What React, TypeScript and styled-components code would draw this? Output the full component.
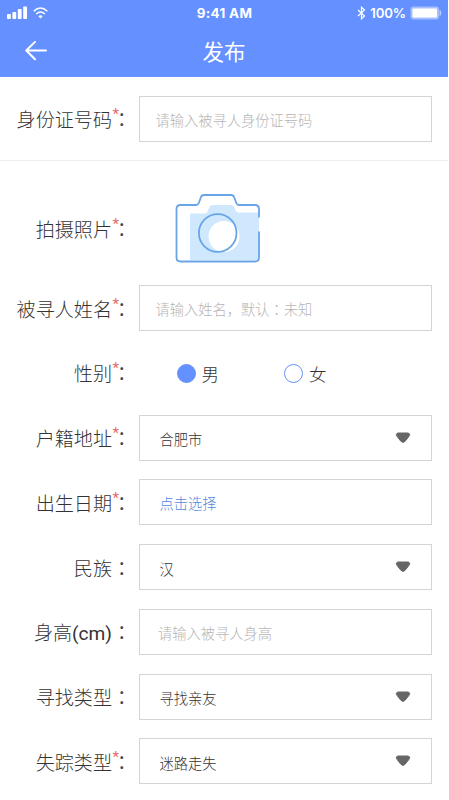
import React, { useState } from "react";
import styled, { createGlobalStyle } from "styled-components";

const GlobalStyle = createGlobalStyle`
  * { box-sizing: border-box; }
  body {
    margin: 0;
    background: #fff;
    overflow: hidden;
    font-family: Roboto, "Noto Sans CJK SC", sans-serif;
    font-weight: 300;
    color: #333;
  }
`;

const Screen = styled.main`
  width: 448px;
  height: 800px;
  overflow: hidden;
  background: #fff;
`;

const Header = styled.header`
  height: 76.5px;
  background: #6491ff;
  color: #fff;
`;

const StatusBar = styled.div`
  display: grid;
  grid-template-columns: 1fr auto 1fr;
  align-items: center;
  height: 25px;
  padding: 0 6px 0 7px;
  font: 700 13.4px Inter, sans-serif;
  letter-spacing: 0.35px;
`;

const StatusGroup = styled.div<{ $end?: boolean }>`
  display: flex;
  align-items: center;
  gap: ${(p) => (p.$end ? "4px" : "6px")};
  justify-content: ${(p) => (p.$end ? "flex-end" : "flex-start")};
  font-weight: 600;
  font-size: 13.2px;
  letter-spacing: -0.1px;
`;

const NavBar = styled.div`
  display: grid;
  grid-template-columns: 1fr auto 1fr;
  align-items: center;
  height: 51px;
  padding: 0 25px;
`;

const BackButton = styled.button`
  display: flex;
  padding: 0;
  border: 0;
  background: none;
`;

const Title = styled.h1`
  margin: 0;
  padding-top: 4px;
  font-size: 21.5px;
  line-height: 32px;
  font-weight: 400;
`;

const IdSection = styled.section`
  height: 84px;
  padding-top: 10px;
  border-bottom: 1px solid #eee;
`;

const Row = styled.div`
  display: grid;
  grid-template-columns: 112px 27px 293px;
  align-items: center;
  height: 64.75px;
`;

const CameraRow = styled.div`
  height: 115.25px;
  padding-top: 33px;
`;

const Label = styled.label`
  padding-top: 5px;
  text-align: right;
  white-space: nowrap;
  font-size: 19.1px;
  line-height: 28px;
`;

const Unit = styled.span`
  font-weight: 400;
`;

const Colon = styled.span`
  position: relative;
  padding: 1px 0 0 5px;
  color: #444;
  font: 350 19px/28px "Noto Sans CJK TC", sans-serif;
  font-feature-settings: "halt";
`;

const Star = styled.sup`
  position: absolute;
  left: 0.5px;
  top: 0;
  color: #e86868;
  font: 400 15px/20px Roboto, sans-serif;
`;

const Box = styled.div<{ $tone?: "hint" | "link"; $inset?: number }>`
  display: flex;
  align-items: center;
  justify-content: space-between;
  height: 46px;
  padding: ${(p) => (p.$tone ? 1 : 2)}px 20px 0 ${(p) => p.$inset ?? 19.5}px;
  border: 1.5px solid #d5d5d5;
  font-size: 14.25px;
  color: ${(p) => (p.$tone === "hint" ? "#b5b5b5" : p.$tone === "link" ? "#5288dc" : "#333")};
`;

const CenteredMark = styled.span`
  font-family: "Noto Sans CJK TC", sans-serif;
`;

const CameraSlot = styled.div`
  padding-left: 36px;
  display: flex;
`;

const Radios = styled.div`
  display: flex;
  padding: 2px 0 0 37.5px;
  gap: 65px;
`;

const Radio = styled.button`
  display: flex;
  align-items: center;
  gap: 6px;
  padding: 0;
  border: 0;
  background: none;
  color: #333;
  font: 300 17.5px/26px "Noto Sans CJK SC", sans-serif;
`;

const Dot = styled.span<{ $on: boolean }>`
  width: 19px;
  height: 19px;
  border-radius: 50%;
  border: 1.5px solid #6491f4;
  background: ${(p) => (p.$on ? "#6491ff" : "#fff")};
`;

const Signal = () => (
  <svg width="20" height="13" viewBox="0 0 20 13" fill="#fff">
    <rect x="0" y="8" width="3.8" height="5" rx="0.8" />
    <rect x="5.4" y="6" width="3.8" height="7" rx="0.8" />
    <rect x="10.8" y="3" width="3.8" height="10" rx="0.8" />
    <rect x="16.2" y="0.5" width="3.8" height="12.5" rx="0.8" />
  </svg>
);

const Wifi = () => (
  <svg width="15" height="12" viewBox="0 0 15 12" fill="none" stroke="#fff" strokeWidth="1.5">
    <path d="M0.7 4.2 Q7.5 -2.2 14.3 4.2M3.2 7 Q7.5 2.9 11.8 7" />
    <path d="M5.4 9.2 Q7.5 7.4 9.6 9.2 L7.5 11.4Z" fill="#fff" stroke="none" />
  </svg>
);

const Bluetooth = () => (
  <svg width="9" height="14" viewBox="0 0 9 14" fill="none" stroke="#fff" strokeWidth="1.2">
    <path d="M1 4 L7.5 10 L4.5 12.8 V1.2 L7.5 4 L1 10" />
  </svg>
);

const Battery = () => (
  <svg width="32" height="14" viewBox="0 0 32 14">
    <rect x="0.5" y="0.5" width="28.5" height="13" rx="3" fill="#a6c0ff" />
    <rect x="2.5" y="2.5" width="24.5" height="9" rx="1" fill="#fff" />
    <path d="M30 4.5 Q32 7 30 9.5Z" fill="#b6caff" stroke="#b6caff" />
  </svg>
);

const BackArrow = () => (
  <svg width="22" height="20" viewBox="0 0 22 20" fill="none" stroke="#fff" strokeWidth="2" strokeLinecap="round" strokeLinejoin="round">
    <path d="M21 9.5 H1.2 M10 0.9 L1.2 9.5 L10 18.3" />
  </svg>
);

const Camera = () => (
  <svg width="86" height="70" viewBox="0 0 86 70" fill="none">
    <path d="M15 19.5 H29 Q32 19.5 33 16.5 L34.5 13 Q35.3 11 37.5 11 H56 Q58.5 11 59.2 13 L60.5 16.5 Q61.3 18.5 63.5 18.5 H84 V66 H15Z" fill="#d0e8fd" />
    <circle cx="49" cy="42.5" r="15.5" fill="#fff" />
    <path
      d="M84 23.5 V15 Q84 11 80 11 H64 Q62 11 61.3 9 L59.3 3.5 Q58.5 1 56 1 H29 Q26.5 1 25.8 3.5 L23.8 9 Q23 11 21 11 H5.5 Q1.5 11 1.5 15 V63.5 Q1.5 67.5 5.5 67.5 H80 Q84 67.5 84 63.5 V37.5"
      stroke="#68a5e8"
      strokeWidth="1.8"
    />
    <circle cx="42.7" cy="39" r="18.8" stroke="#68a5e8" strokeWidth="1.8" />
  </svg>
);

const Caret = () => (
  <svg width="16" height="16" viewBox="0 0 16 16">
    <path d="M3.2 2 H12.8 Q16 2.6 13.8 5.6 L10.2 10.2 Q8 12.6 5.8 10.2 L2.2 5.6 Q0 2.6 3.2 2Z" fill="#666" stroke="#666" strokeLinejoin="round" />
  </svg>
);

interface FieldProps {
  label: string;
  unit?: string;
  required?: boolean;
  children: React.ReactNode;
}

const Field = ({ label, unit, required, children }: FieldProps) => (
  <Row>
    <Label>{label}{unit && <Unit>{unit}</Unit>}</Label>
    <Colon>：{required && <Star>*</Star>}</Colon>
    {children}
  </Row>
);

const SelectBox = ({ value }: { value: string }) => (
  <Box>
    {value}
    <Caret />
  </Box>
);

export default function App() {
  const [gender, setGender] = useState("男");
  return (
    <Screen>
      <GlobalStyle />
      <Header>
        <StatusBar>
          <StatusGroup><Signal /><Wifi /></StatusGroup>
          <span>9:41 AM</span>
          <StatusGroup $end><Bluetooth />100%<Battery /></StatusGroup>
        </StatusBar>
        <NavBar>
          <BackButton aria-label="返回"><BackArrow /></BackButton>
          <Title>发布</Title>
        </NavBar>
      </Header>
      <IdSection>
        <Field label="身份证号码" required>
          <Box $tone="hint" $inset={15.5}>请输入被寻人身份证号码</Box>
        </Field>
      </IdSection>
      <CameraRow>
        <Field label="拍摄照片" required>
          <CameraSlot><Camera /></CameraSlot>
        </Field>
      </CameraRow>
      <Field label="被寻人姓名" required>
        <Box $tone="hint" $inset={15.5}>
          <span>请输入姓名，默认<CenteredMark>：</CenteredMark>未知</span>
        </Box>
      </Field>
      <Field label="性别" required>
        <Radios>
          {["男", "女"].map((g) => (
            <Radio key={g} onClick={() => setGender(g)}>
              <Dot $on={gender === g} />
              {g}
            </Radio>
          ))}
        </Radios>
      </Field>
      <Field label="户籍地址" required><SelectBox value="合肥市" /></Field>
      <Field label="出生日期" required><Box $tone="link">点击选择</Box></Field>
      <Field label="民族"><SelectBox value="汉" /></Field>
      <Field label="身高" unit="(cm)"><Box $tone="hint" $inset={18}>请输入被寻人身高</Box></Field>
      <Field label="寻找类型"><SelectBox value="寻找亲友" /></Field>
      <Field label="失踪类型" required><SelectBox value="迷路走失" /></Field>
    </Screen>
  );
}
